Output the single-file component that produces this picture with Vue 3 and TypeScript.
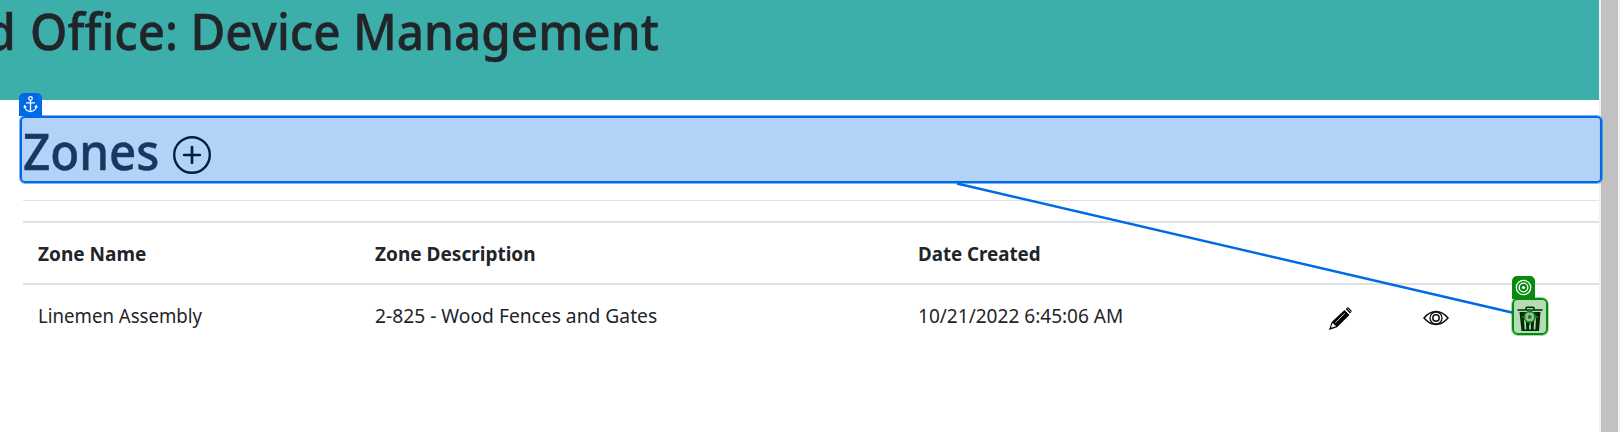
<script setup lang="ts">
interface Zone {
  name: string
  description: string
  created: string
}

const zones: Zone[] = [
  { name: 'Linemen Assembly', description: '2-825 - Wood Fences and Gates', created: '10/21/2022 6:45:06 AM' },
]
</script>

<template>
  <div class="page">
    <main class="view">
      <header class="banner">
        <h1><span class="cut">d</span><span class="title">Office: Device Management</span></h1>
      </header>
      <section class="content">
        <div class="zones">
          <h2>Zones</h2>
          <svg class="plus" viewBox="0 0 38 38" fill="none" stroke="#000">
            <circle cx="19" cy="19" r="17.8" stroke-width="2.4" />
            <path d="M19 11.2v15.600M11.200 19h15.600" stroke-width="2.700" stroke-linecap="round" />
          </svg>
        </div>
        <hr />
        <table>
          <colgroup>
            <col class="c1" /><col class="c2" /><col class="c3" /><col class="c4" /><col class="c5" /><col />
          </colgroup>
          <thead>
            <tr>
              <th><span class="t1">Zone Name</span></th>
              <th><span class="t2">Zone Description</span></th>
              <th><span class="t3">Date Created</span></th>
              <th></th><th></th><th></th>
            </tr>
          </thead>
          <tbody>
            <tr v-for="z in zones" :key="z.name">
              <td><span class="d1">{{ z.name }}</span></td>
              <td><span class="d2">{{ z.description }}</span></td>
              <td><span class="d3">{{ z.created }}</span></td>
              <td>
                <svg class="icon" viewBox="0 0 24 24">
                  <path d="M1 23l2.7-8L16.5 3l5 5L9 20.200z" fill="#000" />
                  <path d="M17.600 2l1.400-1.300q1-.8 2 .2l2.200 2.300q.9 1-.1 2L21.900 6.600z" fill="#000" />
                  <path d="M2.900 20.800l1.700-4.700 3.500 3.200z" fill="#fff" />
                  <path d="M7.300 15.700L16.800 6.400" stroke="#fff" stroke-width=".8" />
                  <path d="M16.700 2.700l5 5M19.200 1.400l3.500 3.500" stroke="#fff" stroke-width=".8" />
                </svg>
              </td>
              <td>
                <svg class="icon eye" viewBox="0 0 26 16" fill="none" stroke="#111">
                  <path d="M1 8Q6.500 1.500 13 1.500T25 8Q19.500 14.500 13 14.500T1 8z" stroke-width="1.500" />
                  <circle cx="13" cy="8" r="6" stroke-width="1.300" />
                  <circle cx="13" cy="8" r="3.200" stroke-width="1.500" />
                </svg>
              </td>
              <td>
                <svg class="icon trash" viewBox="0 0 26 26" fill="#000">
                  <path d="M9 3.500V2.300q0-1 1-1h6q1 0 1 1v1.200" fill="none" stroke="#000" stroke-width="1.600" />
                  <path d="M.5 3.200h25v1.600H.5zM2.500 6h21l-1.500 19H4.500z" />
                  <path d="M7.700 10l.8 13.500M13 10v13.500M18.300 10l-.8 13.500" stroke="#fff" stroke-width="1.700" />
                </svg>
              </td>
            </tr>
          </tbody>
        </table>
      </section>
    </main>
    <div class="scrollbar"></div>

    <svg class="link" viewBox="0 0 1620 432">
      <path d="M957 183.500L1513 312.700" stroke="#0069e5" stroke-width="2.500" />
    </svg>
    <div class="anchor-box"></div>
    <div class="anchor-tab">
      <svg viewBox="0 0 22 23" fill="none" stroke="#fff" stroke-width="1.300">
        <circle cx="11" cy="5.500" r="1.800" />
        <path d="M11 7.300V18.500M6.500 9.800h9" />
        <path d="M5 12.800q.6 5.400 6 5.800q5.400-.4 6-5.800M4.500 14.700l.7-1.800 1.600 1.300M17.500 14.700l-.7-1.800-1.600 1.300" />
      </svg>
    </div>
    <div class="target-box">
      <svg viewBox="0 0 36 37" fill="none">
        <circle cx="17.700" cy="18.900" r="5.400" fill="#a9b3a9" stroke="#078b0c" stroke-width="1.500" />
        <circle cx="17.700" cy="18.900" r="1.900" fill="#078b0c" />
        <path d="M17.700 10.700v4M17.700 23v4M9.500 18.900h4M22 18.900h4" stroke="#078b0c" stroke-width="1.500" />
      </svg>
    </div>
    <div class="target-tab">
      <svg viewBox="0 0 23 23" fill="none" stroke="#fff" stroke-width="1.300">
        <circle cx="11.500" cy="11.500" r="7.200" />
        <circle cx="11.500" cy="11.500" r="4.300" />
        <circle cx="11.500" cy="11.500" r="1.600" fill="#fff" stroke="none" />
      </svg>
    </div>
  </div>
</template>

<style>
body { margin: 0; background: #fff; }
</style>

<style scoped>
.page {
  position: relative;
  display: flex;
  width: 1620px;
  height: 432px;
  overflow: hidden;
  background: #fff;
  color: #212529;
  font-family: "Noto Sans", "Open Sans", sans-serif;
  font-size: 20px;
  line-height: 30px;
}
.view { width: 1599px; height: 432px; }
.scrollbar {
  box-sizing: border-box;
  width: 21px;
  background: #c1c1c1;
  border: solid #f1f1f1;
  border-width: 0 2px;
}
.banner { height: 100px; background: #3cafaa; }
h1, h2 { margin: 0; font-size: 50px; line-height: 60px; font-weight: 500; white-space: nowrap; -webkit-text-stroke: .45px currentColor; }
h1 { display: flex; padding-top: 1px; }
h1 span { display: block; transform-origin: 0 0; }
.cut { width: 29px; margin-left: -15px; }
.title { margin-left: 16px; transform: scaleX(.954); }
.content { padding-left: 23px; }
.zones { display: flex; height: 60px; padding-top: 21px; }
.zones h2 { width: 150px; transform-origin: 0 0; transform: scaleX(.95); }
.plus { width: 38px; height: 38px; margin-top: 15px; }
hr { height: 1px; margin: 19px 0 20px; border: 0; background: #e0e1e3; }
table { width: 1576px; border-collapse: collapse; table-layout: fixed; }
.c1 { width: 337px; }
.c2 { width: 543px; }
.c3 { width: 411px; }
.c4 { width: 94px; }
.c5 { width: 91px; }
th, td { box-sizing: border-box; height: 62px; padding: 0 0 0 15px; text-align: left; vertical-align: middle; white-space: nowrap; }
th { padding-top: 2px; border-top: 2px solid #dee2e6; border-bottom: 2px solid #dee2e6; font-weight: 700; }
th span, td span { display: inline-block; transform-origin: 0 50%; }
.t1, .t2 { transform: scaleX(.951); }
.t3 { transform: scaleX(.936); }
.d1 { transform: scaleX(.93); }
.d2 { transform: scaleX(.961); }
.d3 { transform: scaleX(.952); }
.icon { display: block; width: 24px; height: 24px; margin: 6px 0 0 -1px; }
.eye { width: 26px; height: 16px; margin: 5px 0 0; }
.trash { width: 26px; height: 26px; margin: 6px 0 0 3px; }
.link { position: absolute; inset: 0; width: 1620px; height: 432px; }
.anchor-box {
  position: absolute; left: 20px; top: 116px; width: 1582px; height: 67px;
  box-sizing: border-box; border: 2px solid #0069e5; border-radius: 5px;
  background: rgba(0, 105, 229, .3); background-clip: padding-box;
  box-shadow: 0 0 0 1px rgba(0, 105, 229, .5);
}
.anchor-tab { position: absolute; left: 19px; top: 93px; width: 23px; height: 23px; border-radius: 5px 5px 0 0; background: #0069e5; }
.target-box {
  position: absolute; left: 1512px; top: 298px; width: 36px; height: 37px;
  box-sizing: border-box; border: 2px solid #078b0c; border-radius: 6px; background: rgba(7, 139, 12, .3);
  background-clip: padding-box; box-shadow: 0 0 0 1px rgba(7, 139, 12, .35);
}
.target-box svg { position: absolute; left: -2px; top: -2px; width: 36px; height: 37px; }
.target-tab { position: absolute; left: 1512px; top: 276px; width: 23px; height: 23px; border-radius: 5px 5px 0 0; background: #078b0c; }
.anchor-tab svg, .target-tab svg { display: block; width: 100%; height: 100%; }
</style>
